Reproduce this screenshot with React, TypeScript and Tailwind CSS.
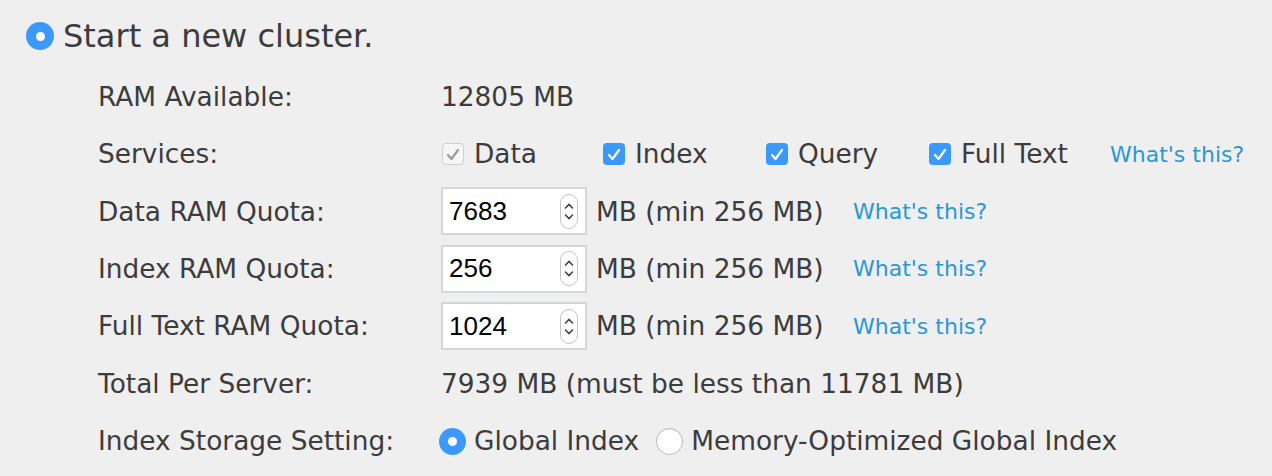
const font = { fontFamily: '"DejaVu Sans", Verdana, sans-serif' };

function Check({ disabled }: { disabled?: boolean }) {
  return (
    <span
      className={
        disabled
          ? 'w-[22px] h-[22px] rounded-[4px] border border-[#cfcfcf] bg-[#f6f6f6] flex items-center justify-center shrink-0'
          : 'w-[22px] h-[22px] rounded-[4px] bg-[#3b99fc] flex items-center justify-center shrink-0'
      }
    >
      <svg width="14" height="13" viewBox="0 0 14 13" fill="none">
        <path
          d="M2 7 L5.5 11 L12 2"
          stroke={disabled ? '#9a9a9a' : '#ffffff'}
          strokeWidth="2.2"
          strokeLinecap="round"
          strokeLinejoin="round"
        />
      </svg>
    </span>
  );
}

function Radio({ on, size = 27 }: { on?: boolean; size?: number }) {
  const s = size === 28 ? 'w-[28px] h-[28px]' : 'w-[27px] h-[27px]';
  if (on) {
    return (
      <span className={`${s} rounded-full bg-[#3b99fc] flex items-center justify-center shrink-0`}>
        <span className="w-[9px] h-[9px] rounded-full bg-white" />
      </span>
    );
  }
  return <span className={`${s} rounded-full bg-white border border-[#b8b8b8] shrink-0 shadow-[inset_0_1px_1px_rgba(0,0,0,0.08)]`} />;
}

function Link() {
  return <span className="text-[22px] text-[#2a97d6]">What's this?</span>;
}

function Spinner() {
  return (
    <span className="w-[18px] h-[35px] rounded-full border border-[#c4c4c4] bg-white flex flex-col items-center justify-center gap-[5px]">
      <svg width="10" height="6" viewBox="0 0 10 6">
        <path d="M1.5 5 L5 1.5 L8.5 5" stroke="#444" strokeWidth="1.6" fill="none" strokeLinecap="round" />
      </svg>
      <svg width="10" height="6" viewBox="0 0 10 6">
        <path d="M1.5 1 L5 4.5 L8.5 1" stroke="#444" strokeWidth="1.6" fill="none" strokeLinecap="round" />
      </svg>
    </span>
  );
}

function QuotaInput({ value }: { value: string }) {
  return (
    <div className="w-[146px] h-[48px] bg-white border-2 border-[#d3d7da] flex items-center justify-between pl-[6px] pr-[7px]">
      <span className="text-[26px] text-black" style={{ fontFamily: '"Liberation Sans", Arial, sans-serif' }}>
        {value}
      </span>
      <Spinner />
    </div>
  );
}

function Row({ label, children }: { label: string; children: React.ReactNode }) {
  return (
    <div className="h-[57.4px] flex items-center">
      <div className="w-[343px] shrink-0">{label}</div>
      <div className="flex items-center">{children}</div>
    </div>
  );
}

export default function App() {
  const quotas = [
    { label: 'Data RAM Quota:', value: '7683' },
    { label: 'Index RAM Quota:', value: '256' },
    { label: 'Full Text RAM Quota:', value: '1024' },
  ];
  const services = [
    { name: 'Data', w: 'w-[161px]', disabled: true },
    { name: 'Index', w: 'w-[163px]' },
    { name: 'Query', w: 'w-[163px]' },
    { name: 'Full Text', w: 'w-[182px]' },
  ];

  return (
    <div className="w-[1272px] h-[476px] bg-[#efefef] text-[#3d3b3c] pt-[9px] overflow-hidden" style={font}>
      <div className="h-[54px] flex items-center pl-[26px] gap-[9px]">
        <Radio on size={28} />
        <span className="text-[32px]">Start a new cluster.</span>
      </div>

      <div className="mt-[5px] pl-[98px] text-[26.4px]">
        <Row label="RAM Available:">
          <span>12805 MB</span>
        </Row>

        <Row label="Services:">
          {services.map((s) => (
            <div key={s.name} className={`${s.w} flex items-center gap-[10px] pl-[1px]`}>
              <Check disabled={s.disabled} />
              <span>{s.name}</span>
            </div>
          ))}
          <Link />
        </Row>

        {quotas.map((q) => (
          <Row key={q.label} label={q.label}>
            <QuotaInput value={q.value} />
            <span className="ml-[9px] w-[257px]">MB (min 256 MB)</span>
            <Link />
          </Row>
        ))}

        <Row label="Total Per Server:">
          <span>7939 MB (must be less than 11781 MB)</span>
        </Row>

        <Row label="Index Storage Setting:">
          <div className="flex items-center gap-[8px] -ml-[2px]">
            <Radio on />
            <span>Global Index</span>
          </div>
          <div className="flex items-center gap-[8px] ml-[17px]">
            <Radio />
            <span>Memory-Optimized Global Index</span>
          </div>
        </Row>
      </div>
    </div>
  );
}
